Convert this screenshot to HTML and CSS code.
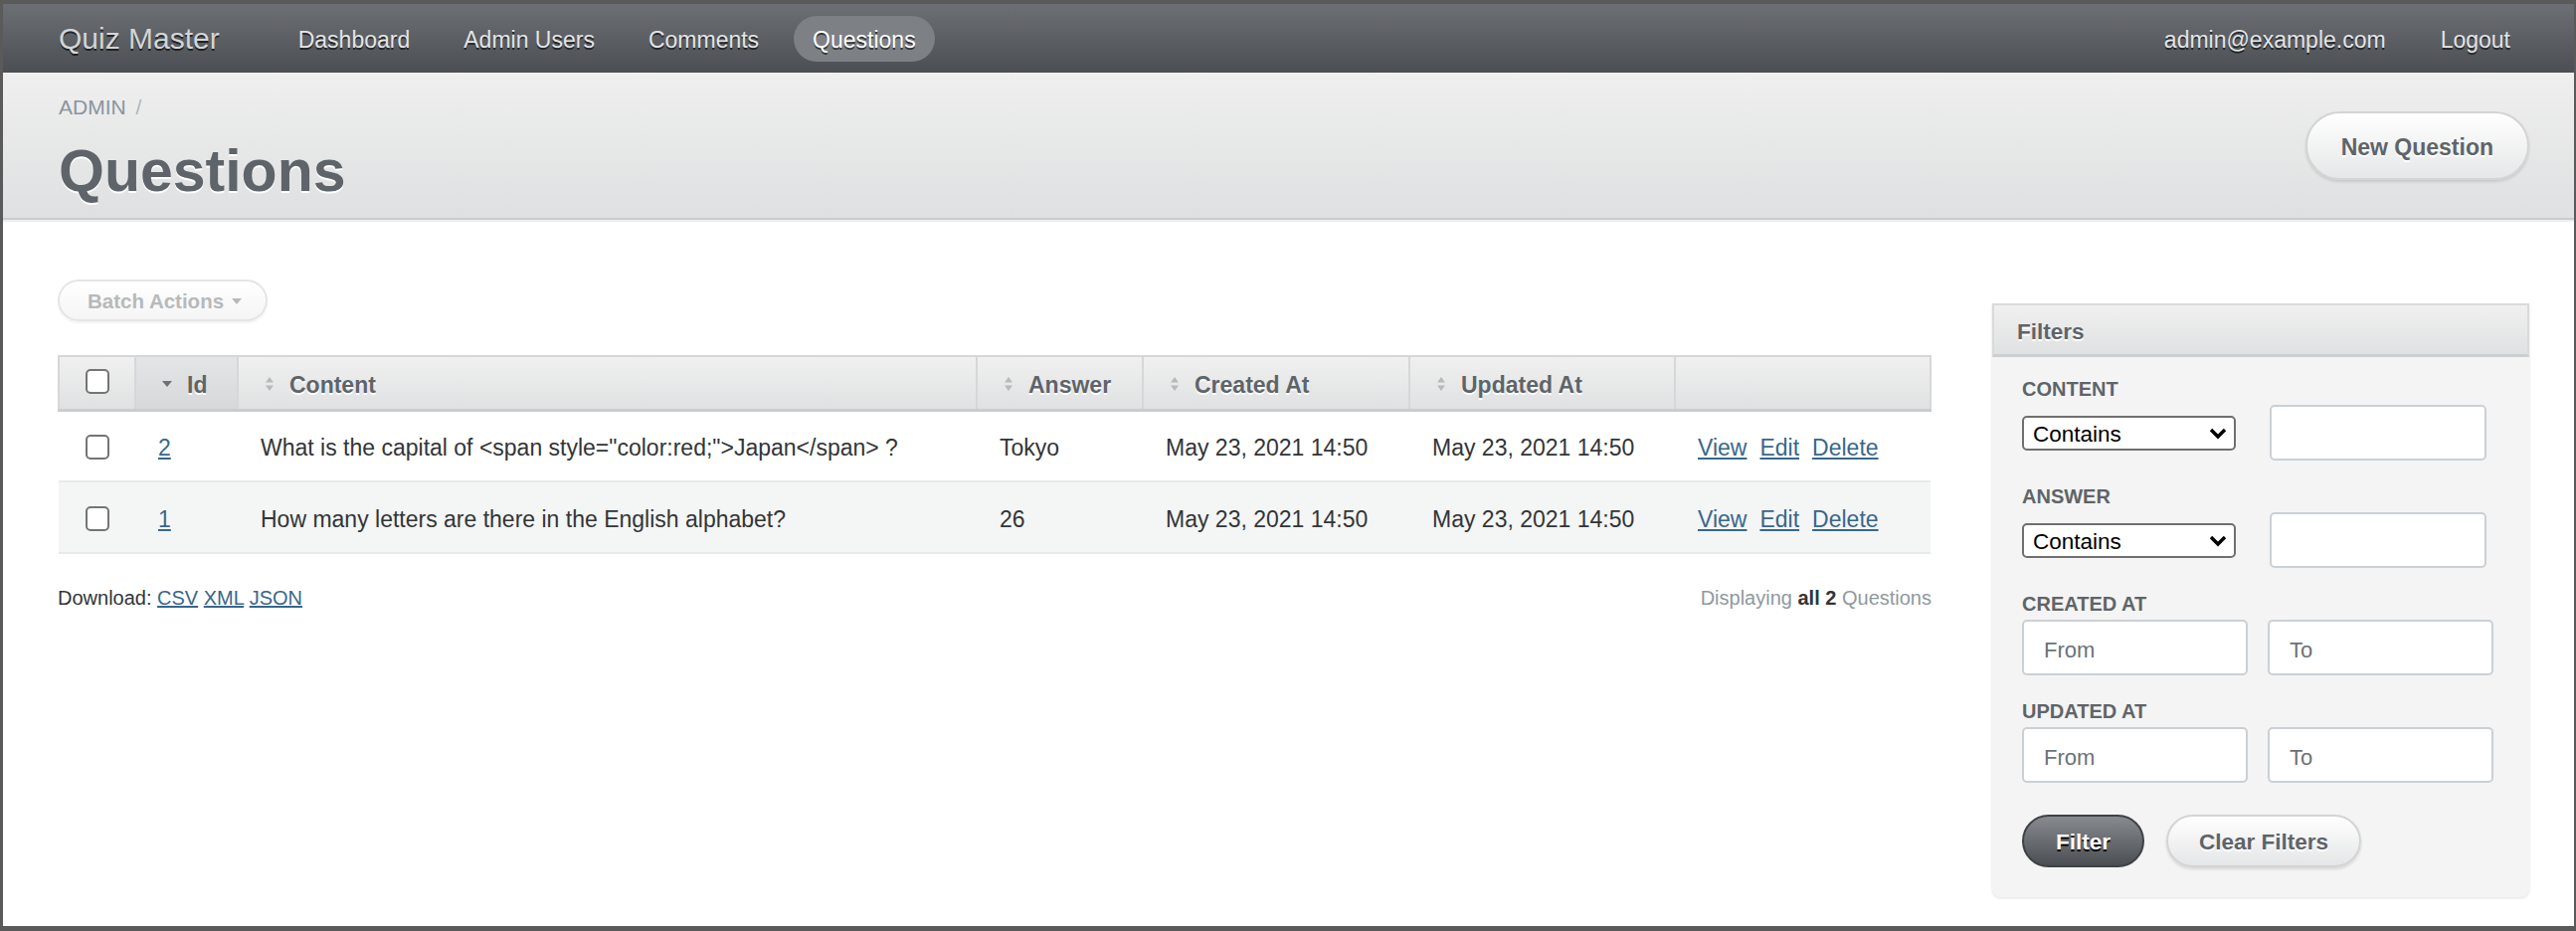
FILE: index.html
```html
<!DOCTYPE html>
<html lang="en">
<head>
<meta charset="utf-8">
<title>Questions | Quiz Master</title>
<link rel="stylesheet" href="styles.css">
</head>
<body>
<div class="frame">
  <header class="topbar">
    <div class="brand">Quiz Master</div>
    <nav class="tabs">
      <a href="#">Dashboard</a>
      <a href="#">Admin Users</a>
      <a href="#">Comments</a>
      <a href="#" class="current">Questions</a>
    </nav>
    <nav class="tabs utility">
      <a href="#">admin@example.com</a>
      <a href="#">Logout</a>
    </nav>
  </header>

  <div class="titlebar">
    <div class="title-left">
      <div class="breadcrumb">ADMIN <span class="sep">/</span></div>
      <h2 class="page-title">Questions</h2>
    </div>
    <a href="#" class="btn-new">New Question</a>
  </div>

  <div class="content">
    <main class="main">
      <div class="batch">Batch Actions
        <svg class="caret" width="10" height="6" viewBox="0 0 10 6"><polygon points="0,0 10,0 5,6" fill="#b9b9b9"/></svg>
      </div>

      <table class="index-table">
        <colgroup>
          <col class="c-check"><col class="c-id"><col class="c-content"><col class="c-answer"><col class="c-created"><col class="c-updated"><col class="c-actions">
        </colgroup>
        <thead>
          <tr>
            <th class="cell-check"><input type="checkbox" class="cb"></th>
            <th class="sorted"><span class="th-in"><svg class="sort" width="10" height="16" viewBox="0 0 10 16"><polygon points="0,5 10,5 5,11" fill="#6d7175"/></svg>Id</span></th>
            <th><span class="th-in"><svg class="sort" width="10" height="16" viewBox="0 0 10 16"><polygon points="1,6.5 9,6.5 5,1" fill="#b6babd"/><polygon points="1,9.5 9,9.5 5,15" fill="#b6babd"/></svg>Content</span></th>
            <th><span class="th-in"><svg class="sort" width="10" height="16" viewBox="0 0 10 16"><polygon points="1,6.5 9,6.5 5,1" fill="#b6babd"/><polygon points="1,9.5 9,9.5 5,15" fill="#b6babd"/></svg>Answer</span></th>
            <th><span class="th-in"><svg class="sort" width="10" height="16" viewBox="0 0 10 16"><polygon points="1,6.5 9,6.5 5,1" fill="#b6babd"/><polygon points="1,9.5 9,9.5 5,15" fill="#b6babd"/></svg>Created At</span></th>
            <th><span class="th-in"><svg class="sort" width="10" height="16" viewBox="0 0 10 16"><polygon points="1,6.5 9,6.5 5,1" fill="#b6babd"/><polygon points="1,9.5 9,9.5 5,15" fill="#b6babd"/></svg>Updated At</span></th>
            <th></th>
          </tr>
        </thead>
        <tbody>
          <tr>
            <td class="cell-check"><input type="checkbox" class="cb"></td>
            <td><a href="#" class="link">2</a></td>
            <td>What is the capital of &lt;span style="color:red;"&gt;Japan&lt;/span&gt; ?</td>
            <td>Tokyo</td>
            <td>May 23, 2021 14:50</td>
            <td>May 23, 2021 14:50</td>
            <td class="actions"><a href="#" class="link">View</a><a href="#" class="link">Edit</a><a href="#" class="link">Delete</a></td>
          </tr>
          <tr class="even">
            <td class="cell-check"><input type="checkbox" class="cb"></td>
            <td><a href="#" class="link">1</a></td>
            <td>How many letters are there in the English alphabet?</td>
            <td>26</td>
            <td>May 23, 2021 14:50</td>
            <td>May 23, 2021 14:50</td>
            <td class="actions"><a href="#" class="link">View</a><a href="#" class="link">Edit</a><a href="#" class="link">Delete</a></td>
          </tr>
        </tbody>
      </table>

      <div class="table-footer">
        <div class="download">Download: <a href="#" class="link">CSV</a> <a href="#" class="link">XML</a> <a href="#" class="link">JSON</a></div>
        <div class="info">Displaying <b>all 2</b> Questions</div>
      </div>
    </main>

    <aside class="sidebar">
      <div class="panel">
        <h3 class="panel-head">Filters</h3>
        <form class="panel-body">
          <div class="field">
            <label class="lbl">Content</label>
            <div class="row row-select">
              <div class="select-wrap">
                <select class="sel"><option>Contains</option></select>
                <svg class="chev" width="18" height="12" viewBox="0 0 18 12"><polyline points="2,2 9,9 16,2" fill="none" stroke="#000" stroke-width="3.4"/></svg>
              </div>
              <input type="text" class="txt txt-wide">
            </div>
          </div>
          <div class="field">
            <label class="lbl">Answer</label>
            <div class="row row-select">
              <div class="select-wrap">
                <select class="sel"><option>Contains</option></select>
                <svg class="chev" width="18" height="12" viewBox="0 0 18 12"><polyline points="2,2 9,9 16,2" fill="none" stroke="#000" stroke-width="3.4"/></svg>
              </div>
              <input type="text" class="txt txt-wide">
            </div>
          </div>
          <div class="field">
            <label class="lbl">Created At</label>
            <div class="row row-date">
              <input type="text" class="txt txt-date" placeholder="From">
              <input type="text" class="txt txt-date" placeholder="To">
            </div>
          </div>
          <div class="field">
            <label class="lbl">Updated At</label>
            <div class="row row-date">
              <input type="text" class="txt txt-date" placeholder="From">
              <input type="text" class="txt txt-date" placeholder="To">
            </div>
          </div>
          <div class="buttons">
            <button type="button" class="btn btn-dark">Filter</button>
            <button type="button" class="btn btn-light">Clear Filters</button>
          </div>
        </form>
      </div>
    </aside>
  </div>
</div>
</body>
</html>
```

FILE: styles.css
```css
* { box-sizing: border-box; }
html, body { margin: 0; padding: 0; }
body {
  font-family: "Liberation Sans", Arial, Helvetica, sans-serif;
  color: #323537;
  background: #fff;
}

.frame {
  width: 2590px;
  height: 936px;
  border-style: solid;
  border-color: #5a5a5a;
  border-width: 4px 2px 5px 3px;
  background: #fff;
  display: flex;
  flex-direction: column;
  overflow: hidden;
}

/* ---------- top header ---------- */
.topbar {
  height: 69px;
  flex-shrink: 0;
  display: flex;
  align-items: center;
  padding: 0 45px 0 56px;
  background: linear-gradient(#6c7075, #4b4e52);
}
.brand {
  font-size: 30px;
  color: #d4d5d6;
  text-shadow: 0 2px 0 rgba(0, 0, 0, 0.65);
  margin-right: 60px;
  padding-top: 1px;
  white-space: nowrap;
}
.tabs {
  display: flex;
  gap: 16px;
}
.tabs a {
  font-size: 23px;
  color: #e4e5e6;
  text-decoration: none;
  padding: 3px 19px 0;
  height: 46px;
  display: flex;
  align-items: center;
  border-radius: 23px;
  text-shadow: 0 2px 0 rgba(0, 0, 0, 0.6);
  white-space: nowrap;
}
.tabs a.current {
  background: #7d8185;
  color: #fff;
}
.utility {
  margin-left: auto;
  gap: 17px;
}

/* ---------- title bar ---------- */
.titlebar {
  height: 148px;
  flex-shrink: 0;
  display: flex;
  justify-content: space-between;
  align-items: flex-start;
  padding: 0 45px 0 56px;
  background: linear-gradient(#efefef, #dfe0e1);
  border-bottom: 2px solid #cbcccd;
  box-shadow: 0 2px 0 #eeeeee;
}
.title-left {
  padding-top: 23px;
}
.breadcrumb {
  font-size: 21px;
  line-height: 24px;
  color: #8a949e;
}
.breadcrumb .sep {
  color: #b0b6bb;
  margin-left: 4px;
}
.page-title {
  margin: 23px 0 0;
  font-size: 59px;
  line-height: 59px;
  font-weight: bold;
  color: #5e6469;
  text-shadow: 0 2px 0 #fff;
}
.btn-new {
  align-self: center;
  height: 69px;
  display: flex;
  align-items: center;
  padding: 4px 34px 0;
  border-radius: 35px;
  border: 2px solid #d3d4d5;
  background: linear-gradient(#ffffff, #e6e7e8);
  box-shadow: 0 2px 3px rgba(0, 0, 0, 0.12);
  font-size: 23px;
  font-weight: bold;
  color: #5e6469;
  text-decoration: none;
  text-shadow: 0 2px 0 #fff;
}

/* ---------- content ---------- */
.content {
  flex: 1;
  display: flex;
  align-items: flex-start;
  gap: 61px;
  padding: 60px 45px 0 55px;
}
.main {
  flex: 1;
  min-width: 0;
}
.batch {
  display: inline-flex;
  align-items: center;
  gap: 8px;
  height: 42px;
  padding: 2px 24px 0 28px;
  border: 2px solid #e4e5e6;
  border-radius: 21px;
  background: linear-gradient(#ffffff, #f5f5f5);
  box-shadow: 0 2px 2px rgba(0, 0, 0, 0.05);
  font-size: 20.5px;
  font-weight: bold;
  color: #b7b9bb;
}
.caret { display: block; }

.index-table {
  width: 100%;
  margin-top: 34px;
  border-collapse: collapse;
  table-layout: fixed;
}
.c-check { width: 77px; }
.c-id { width: 103px; }
.c-content { width: 743px; }
.c-answer { width: 167px; }
.c-created { width: 268px; }
.c-updated { width: 267px; }

.index-table th {
  height: 54px;
  padding: 4px 0 0 26px;
  text-align: left;
  font-size: 23px;
  font-weight: bold;
  color: #5e6469;
  text-shadow: 0 2px 0 #fff;
  background: linear-gradient(#f0f0f0, #e0e1e2);
  border: 2px solid #d6d7d8;
  border-bottom: 3px solid #cbcccd;
  white-space: nowrap;
}
.index-table th.sorted {
  background: linear-gradient(#e4e5e6, #d6d8d9);
}
.th-in {
  display: inline-flex;
  align-items: center;
  gap: 15px;
}
.sort { display: block; margin-top: -3px; }

.index-table td {
  height: 72px;
  padding: 5px 0 0 23px;
  font-size: 23px;
  color: #323537;
  border-bottom: 2px solid #e8e9ea;
  vertical-align: middle;
  white-space: nowrap;
}
.index-table tr.even td {
  background: #f4f5f5;
}
.index-table .cell-check {
  padding: 0;
  text-align: center;
}
.cb {
  appearance: none;
  -webkit-appearance: none;
  width: 24px;
  height: 25px;
  margin: 0;
  border: 2px solid #747474;
  border-radius: 5px;
  background: #fff;
  vertical-align: middle;
}
th .cb { margin-top: -6px; }

.link {
  color: #38678b;
  text-decoration: underline;
}
.actions .link {
  margin-right: 13px;
}

.table-footer {
  margin-top: 32px;
  display: flex;
  justify-content: space-between;
  font-size: 20px;
  line-height: 24px;
}
.download { color: #323537; }
.info { color: #8f989f; }
.info b { color: #323537; }

/* ---------- sidebar ---------- */
.sidebar {
  width: 540px;
  flex-shrink: 0;
  margin-top: 24px;
}
.panel {
  background: #f4f4f4;
  border-radius: 0 0 8px 8px;
  box-shadow: 0 1px 3px rgba(0, 0, 0, 0.12);
}
.panel-head {
  margin: 0;
  height: 54px;
  display: flex;
  align-items: center;
  padding: 4px 0 0 23px;
  font-size: 22.5px;
  font-weight: bold;
  color: #5e6469;
  text-shadow: 0 2px 0 #fff;
  background: linear-gradient(#f0f0f0, #e0e1e2);
  border: 2px solid #d9dadb;
  border-bottom: 3px solid #cdcecf;
}
.panel-body {
  margin: 0;
  padding: 20px 0 30px 30px;
}
.field + .field {
  margin-top: 24px;
}
.lbl {
  display: block;
  font-size: 20px;
  line-height: 24px;
  font-weight: bold;
  text-transform: uppercase;
  color: #5e6469;
  margin-bottom: 4px;
}
.row {
  display: flex;
  align-items: center;
}
.row-select { gap: 34px; }
.row-date { gap: 20px; }

.select-wrap {
  position: relative;
  width: 215px;
  height: 35px;
}
.sel {
  appearance: none;
  -webkit-appearance: none;
  width: 100%;
  height: 100%;
  margin: 0;
  padding: 3px 0 0 9px;
  border: 2px solid #6f6f6f;
  border-radius: 5px;
  background: #fff;
  font-family: "Liberation Sans", Arial, sans-serif;
  font-size: 22.5px;
  color: #000;
}
.chev {
  position: absolute;
  right: 9px;
  top: 12px;
  pointer-events: none;
}
.txt {
  height: 56px;
  margin: 0;
  padding: 5px 0 0 20px;
  border: 2px solid #cbd0d5;
  border-radius: 5px;
  background: #fff;
  font-family: "Liberation Sans", Arial, sans-serif;
  font-size: 22px;
  color: #323537;
}
.txt::placeholder { color: #6c7278; }
.txt-wide { width: 218px; }
.txt-date { width: 227px; }

.buttons {
  margin-top: 32px;
  display: flex;
  gap: 22px;
}
.btn {
  height: 53px;
  padding-top: 3px;
  border-radius: 27px;
  font-family: "Liberation Sans", Arial, sans-serif;
  font-size: 22.5px;
  font-weight: bold;
  cursor: pointer;
}
.btn-dark {
  padding-left: 32px;
  padding-right: 32px;
  border: 2px solid #3f4245;
  background: linear-gradient(#878a8e, #4b4e52);
  color: #fff;
  text-shadow: 0 2px 0 #000;
}
.btn-light {
  padding-left: 31px;
  padding-right: 31px;
  border: 2px solid #d3d4d5;
  background: linear-gradient(#ffffff, #e5e6e7);
  color: #5e6469;
  text-shadow: 0 2px 0 #fff;
  box-shadow: 0 2px 3px rgba(0, 0, 0, 0.12);
}
```
